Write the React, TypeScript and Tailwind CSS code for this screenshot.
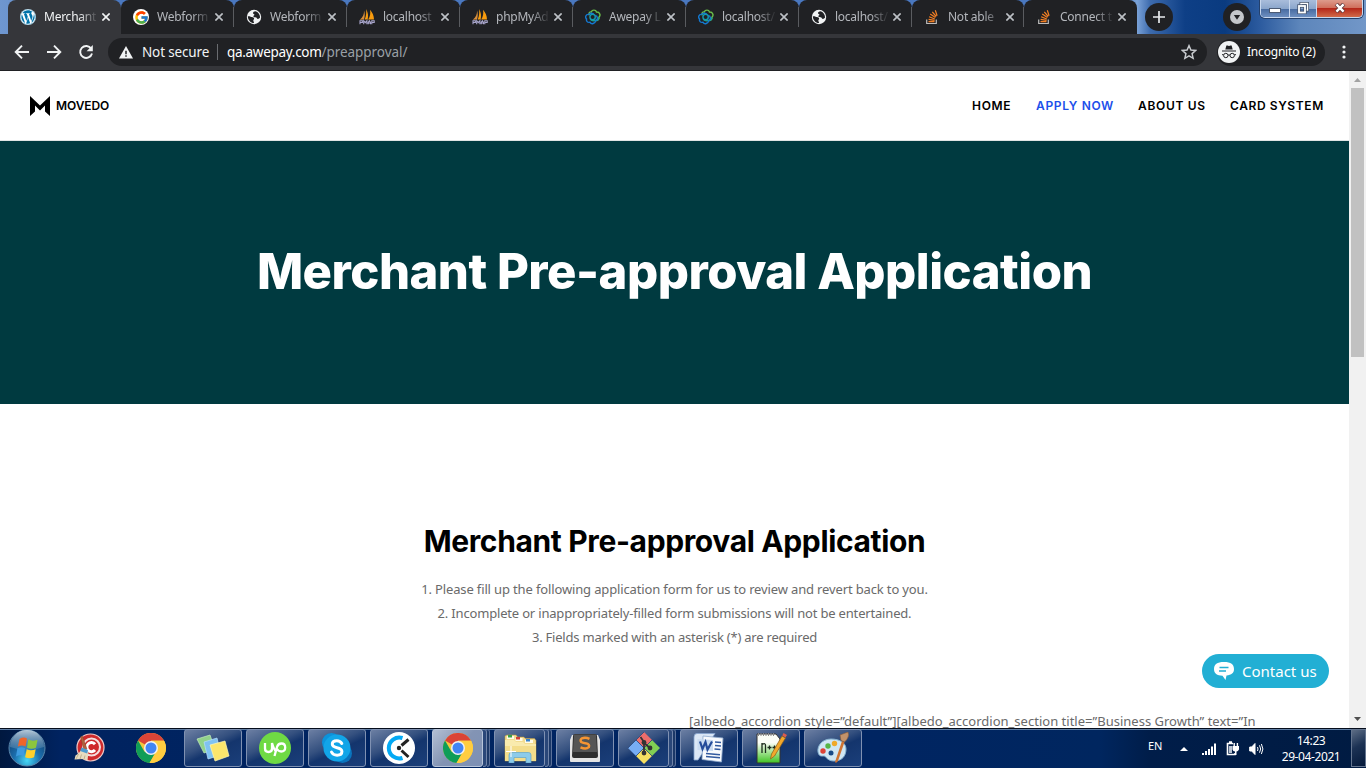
import React from 'react';
import { FaWordpress } from 'react-icons/fa';
import { FcGoogle } from 'react-icons/fc';

const WordpressIcon = () => (
  <span className="flex size-4 items-center justify-center rounded-full bg-white">
    <FaWordpress className="size-4 text-[#0073aa]" />
  </span>
);

const GoogleIcon = () => (
  <span className="flex size-4 items-center justify-center rounded-full bg-white">
    <FcGoogle className="size-[15px]" />
  </span>
);

const GlobeIcon = () => (
  <svg viewBox="0 0 16 16" className="size-4">
    <circle cx="8" cy="8" r="7.2" fill="#f1f3f4" />
    <path d="M1.800 7.200c1.700-.3 2.700.4 4 .9 1.500.5 2 .3 2.300 1.300.2.900-.8 1-.8 2s1 1.300.6 2.700c-3.300-.2-5.900-3-6.100-6.900z" fill="#202124" />
    <path d="M9.500 2.200C8 2.400 6.800 3.200 7 4.200c.2 1 1.500.7 1.400 1.600-.1.700-1.300.8-1 1.600.4 1 2 .5 2.900 1 .8.500.7 1.400 1.600 1.500.9 0 1.500-.9 2.200-1.500-.1-3-2-5.500-4.600-6.200z" fill="#202124" />
  </svg>
);

const PmaIcon = () => (
  <svg viewBox="0 0 16 16" className="size-4">
    <path d="M5 1.500C5.300 5 4 8 .8 10.800l4.200-.2C6 7 6 4 5 1.500z" fill="#d98f3c" />
    <path d="M7 0c2.200 3.600 2.400 7 1.600 10.600H5.700C7.200 7 7.600 3.500 7 0z" fill="#f89c0e" />
    <path d="M11 .8c2.600 3 3.900 6 4 9.700l-5.800.1C11.200 7.500 11.700 4 11 .8z" fill="#f89c0e" />
    <path d="M1 15.300v-3.600h2.400v1.800H1M4.700 15.300v-3.600l1.600 2 1.600-2v3.600M9.200 15.300v-1.800l1.200-1.800 1.100 1.800v1.800M9.200 14h2.300M12.800 15.300v-3.600h2.400v1.800h-2.400" fill="none" stroke="#a9a6cc" strokeWidth="1.100" />
  </svg>
);

const AwepayIcon = () => (
  <svg viewBox="0 0 16 16" className="size-4" fill="none" strokeWidth="1.400">
    <path d="M4.300 6.200C3.500 3.500 5 2.600 6.300 2.900 7.200.500 10.800.600 11.500 3c3.500-.1 4.500 3.500 2.300 5.200.6 2.300-1.300 3.600-3.300 3.200" stroke="#6cc04a" />
    <path d="M13.800 8.200c.6 2.300-1.300 3.600-3.300 3.200-2 .5-4.700.2-5.500-1.900" stroke="#1fa38a" />
    <path d="M10.200 6.500c2.800.5 3 4.300.5 5.200-.5 3-4.300 4-5.700 1.600-2.600.6-4-1.300-3.400-3.200C-.3 8.400.900 5.200 3.500 5.400c1-1.600 4.600-1.700 5.700.4" stroke="#1479d2" />
    <circle cx="7.600" cy="8.100" r="2.700" stroke="#149bb0" />
  </svg>
);

const StackIcon = () => (
  <svg viewBox="0 0 16 16" className="size-4" fill="none">
    <path d="M2.700 10.500v4h9.600v-4" stroke="#bcbbbb" strokeWidth="1.200" />
    <path d="M4.500 12.700h6M4.600 10.400l6 .9M5.100 7.800l5.700 2.200M6.200 5l5.200 3.400M8.300 2.800l3.900 4.700M11.300 1.200l1.800 5.500" stroke="#f48024" strokeWidth="1.200" />
  </svg>
);

const tabs = [
  { title: 'Merchant', icon: <WordpressIcon />, width: 'w-[113px]' },
  { title: 'Webform', icon: <GoogleIcon />, width: 'w-[113px]' },
  { title: 'Webform', icon: <GlobeIcon />, width: 'w-[113px]' },
  { title: 'localhost', icon: <PmaIcon />, width: 'w-[113px]' },
  { title: 'phpMyAd', icon: <PmaIcon />, width: 'w-[113px]' },
  { title: 'Awepay L', icon: <AwepayIcon />, width: 'w-[113px]' },
  { title: 'localhost/', icon: <AwepayIcon />, width: 'w-[113px]' },
  { title: 'localhost/', icon: <GlobeIcon />, width: 'w-[113px]' },
  { title: 'Not able', icon: <StackIcon />, width: 'w-[112px]' },
  { title: 'Connect t', icon: <StackIcon />, width: 'w-[113px]' },
];

function Tab({ title, icon, width, active, divider }: { title: string; icon: React.ReactNode; width: string; active: boolean; divider: boolean }) {
  const tone = active ? 'bg-[#35363a] text-[#f1f3f4]' : 'bg-[#202124] text-[#b4b7bc]';
  return (
    <div className={`flex h-[34px] shrink-0 items-center rounded-t-lg pl-3 ${width} ${tone}`}>
      <span className="shrink-0">{icon}</span>
      <span className="ml-2 w-[54px] whitespace-nowrap text-[12px] tracking-[-0.25px] [mask-image:linear-gradient(to_right,black_65%,rgba(0,0,0,0.15)_95%)]">{title}</span>
      <svg viewBox="0 0 8 8" className="ml-1 size-2 shrink-0" stroke={active ? '#f1f3f4' : '#bdc1c6'} strokeWidth="1.600">
        <path d="M.4.4l7.200 7.200M7.600.4L.4 7.600" />
      </svg>
      <span className={`ml-auto h-5 w-px ${divider ? 'bg-[#5a5c60]' : 'bg-transparent'}`} />
    </div>
  );
}

function TabStrip() {
  return (
    <div className="flex h-[34px] bg-[linear-gradient(90deg,#6f97cf_0,#4a78c0_110px,#4a78c0_1120px,#7aa2d8_1137px,#3e6cae_1150px,#0e3f86_1185px,#0a3b80_1225px,#2c5b9f_1260px,#5d86bb_1300px,#7297c8_1366px)]">
      <div className="w-2 shrink-0" />
      <div className="flex w-[1129px] shrink-0">
        {tabs.map((t, i) => (
          <Tab key={i} title={t.title} icon={t.icon} width={t.width} active={i === 0} divider={i > 0 && i < 9} />
        ))}
      </div>
      <div className="mt-[3px] ml-2 flex size-7 items-center justify-center rounded-full bg-[#202124]">
        <svg viewBox="0 0 12 12" className="size-3" stroke="#e8eaed" strokeWidth="1.700"><path d="M6 0v12M0 6h12" /></svg>
      </div>
      <div className="mt-[3px] ml-[50px] flex size-7 items-center justify-center rounded-full bg-[#202124]">
        <svg viewBox="0 0 14 14" className="size-[14px]"><circle cx="7" cy="7" r="7" fill="#c4c7cb" /><path d="M3.800 5h6.400L7 9.800z" fill="#202124" /></svg>
      </div>
      <div className="ml-[9px] flex h-[18px] w-[103px] overflow-hidden rounded-b-[5px] border border-t-0 border-[#c9d8ee] shadow-[0_0_0_1px_#23406c]">
        <div className="flex w-[29px] items-end justify-center border-r border-[#c9d8ee] bg-[linear-gradient(#a9bddb_0,#8ba6cc_50%,#46699f_51%,#6d8fc0)] pb-[4px]">
          <svg viewBox="0 0 12 5" className="h-[5px] w-3"><rect x=".5" y=".5" width="11" height="4" fill="#fff" stroke="#4b5a73" /></svg>
        </div>
        <div className="flex w-[27px] items-center justify-center border-r border-[#c9d8ee] bg-[linear-gradient(#a9bddb_0,#8ba6cc_50%,#46699f_51%,#6d8fc0)] pb-[1px]">
          <svg viewBox="0 0 12 12" className="size-3" fill="none"><path d="M4 3V1.500h6.500V8H9" stroke="#44536d" strokeWidth="3" /><path d="M4 3V1.500h6.500V8H9" stroke="#fff" strokeWidth="1.500" /><rect x="2" y="4" width="6" height="6.500" stroke="#44536d" strokeWidth="3.400" /><rect x="2" y="4" width="6" height="6.500" stroke="#fff" strokeWidth="1.800" /></svg>
        </div>
        <div className="flex flex-1 items-center justify-center bg-[linear-gradient(#dd9b8c_0,#d0705d_45%,#b5281a_50%,#d06a4a)] pb-[1px]">
          <svg viewBox="0 0 12 10" className="h-[10px] w-3"><path d="M2.200 1l7.600 8M9.800 1L2.200 9" stroke="#5b3438" strokeWidth="4" /><path d="M2.400 1.300l7.200 7.400M9.600 1.300L2.400 8.700" stroke="#fff" strokeWidth="2.400" /></svg>
        </div>
      </div>
    </div>
  );
}

const Incognito = () => (
  <svg viewBox="0 0 22 22" className="size-[22px]">
    <circle cx="11" cy="11" r="11" fill="#f1f3f4" />
    <path d="M7.300 8.600l1.100-4h1.100l1.500.5 1.500-.5h1.100l1.100 4zM4 9.400h14v1.100H4z" fill="#202124" />
    <g fill="none" stroke="#202124" strokeWidth="1"><circle cx="7.800" cy="14.500" r="2.200" /><circle cx="14.200" cy="14.500" r="2.200" /><path d="M10 14.200q1-.6 2 0M4 13.700h1.500M16.500 13.700H18" /></g>
  </svg>
);

function Toolbar() {
  return (
    <div className="flex h-[37px] items-center border-b border-[#202124] bg-[#35363a] text-[#e8eaed]">
      <svg viewBox="0 0 16 16" className="ml-[14px] size-4" fill="none" stroke="#f1f3f4" strokeWidth="1.900"><path d="M15 8H2M8 1.700L1.700 8 8 14.300" /></svg>
      <svg viewBox="0 0 16 16" className="ml-4 size-4" fill="none" stroke="#f1f3f4" strokeWidth="1.900"><path d="M1 8h13M8 1.700L14.300 8 8 14.300" /></svg>
      <svg viewBox="0 0 16 16" className="ml-4 size-4" fill="none"><path d="M13.200 4.600A6 6 0 1 0 14 9.500" stroke="#f1f3f4" strokeWidth="1.900" /><path d="M14.800 1v6.200H8.600z" fill="#f1f3f4" /></svg>
      <div className="ml-[14px] flex h-7 w-[1099px] items-center rounded-full bg-[#202124] text-[14px]">
        <svg viewBox="0 0 16 14" className="ml-[10px] h-[13px] w-[16px]"><path d="M8 0l7.600 13.500H.4z" fill="#f1f3f4" /><path d="M7.200 5h1.600v3.800H7.200zM7.200 10h1.600v1.700H7.200z" fill="#202124" /></svg>
        <span className="ml-2 w-[67px] whitespace-nowrap text-[13.500px] tracking-[-0.15px] text-[#f1f3f4]">Not secure</span>
        <span className="ml-2 h-4 w-px bg-[#6a6c70]" />
        <span className="ml-[9px] whitespace-nowrap text-[13.500px] tracking-[-0.3px] text-white">qa.awepay.com<span className="tracking-[-0.05px] text-[#9aa0a6]">/preapproval/</span></span>
        <svg viewBox="0 0 24 24" className="mr-[10px] ml-auto size-4" fill="none" stroke="#c8cbcf" strokeWidth="2.200"><path d="M12 2.500l2.900 6.600 7.100.6-5.400 4.700 1.600 7L12 17.700l-6.200 3.700 1.600-7L2 9.700l7.100-.6z" /></svg>
      </div>
      <div className="ml-[10px] flex h-[27px] w-[108px] items-center rounded-full bg-[#202124]">
        <span className="ml-[1px]"><Incognito /></span>
        <span className="ml-[7px] whitespace-nowrap text-[12px] tracking-[-0.2px] text-white">Incognito (2)</span>
      </div>
      <svg viewBox="0 0 4 14" className="ml-[17px] h-[14px] w-1" fill="#f1f3f4"><circle cx="2" cy="2" r="1.600" /><circle cx="2" cy="7" r="1.600" /><circle cx="2" cy="12" r="1.600" /></svg>
    </div>
  );
}

function Page() {
  return (
    <div className="flex w-[1349px] flex-col overflow-hidden bg-white">
      <header className="flex h-[70px] shrink-0 items-center border-b border-[#e0e4e4] pl-[30px] font-['Inter',sans-serif] text-[12px] font-semibold text-black">
        <svg viewBox="0 0 20 20" className="h-5 w-5"><path d="M0 0l10 9.500L20 0v20l-5-4.500V9.500l-5 5-5-5v6L0 20z" /></svg>
        <span className="ml-[6px] w-[54px] tracking-[-0.1px]">MOVEDO</span>
        <nav className="ml-[862px] flex whitespace-nowrap">
          <span className="w-16 tracking-[0.7px]">HOME</span>
          <span className="w-[102px] tracking-[0.650px] text-[#1c4fea]">APPLY NOW</span>
          <span className="w-[92px] tracking-[0.700px]">ABOUT US</span>
          <span className="tracking-[0.600px]">CARD SYSTEM</span>
        </nav>
      </header>
      <section className="flex h-[263px] shrink-0 items-center justify-center bg-[#003a40] pb-0.5">
        <h1 className="whitespace-nowrap font-['Inter',sans-serif] text-[49px] font-extrabold tracking-[-0.500px] text-white">Merchant Pre-approval Application</h1>
      </section>
      <section className="flex h-[324px] shrink-0 flex-col items-center overflow-hidden pt-[119px] text-[#6a6a6a]">
        <h2 className="h-9 whitespace-nowrap font-['Inter',sans-serif] text-[30px] leading-9 font-bold tracking-[-0.360px] text-black">Merchant Pre-approval Application</h2>
        <div className="mt-[18px] text-center text-[13px] leading-6 whitespace-nowrap">
          <p className="tracking-[-0.14px]">1. Please fill up the following application form for us to review and revert back to you.</p>
          <p className="tracking-[-0.18px]">2. Incomplete or inappropriately-filled form submissions will not be entertained.</p>
          <p className="tracking-[-0.220px]">3. Fields marked with an asterisk (*) are required</p>
        </div>
        <div className="mt-[60px] ml-[689px] self-start text-[13px] leading-6 tracking-[0.01px] whitespace-nowrap">[albedo_accordion style=”default”][albedo_accordion_section title=”Business Growth” text=”In</div>
      </section>
    </div>
  );
}

function Scrollbar() {
  return (
    <div className="flex w-[17px] flex-col items-center bg-[#f1f1f1]">
      <svg viewBox="0 0 17 17" className="size-[17px]"><path d="M5 11l3.500-4 3.500 4z" fill="#a3a3a3" /></svg>
      <div className="h-[269px] w-[13px] bg-[#c1c1c1]" />
      <svg viewBox="0 0 17 17" className="mt-auto size-[17px]"><path d="M5 6l3.500 4L12 6z" fill="#505050" /></svg>
    </div>
  );
}

const Chrome = () => (
  <svg viewBox="0 0 30 30" className="size-[30px]">
    <circle cx="15" cy="15" r="15" fill="#f4c63d" />
    <path d="M15 15L2 7.500A15 15 0 0 1 28 7.500H15z" fill="#db4437" />
    <path d="M2 7.500A15 15 0 0 0 13.500 30l6.500-11.500L15 15 8.500 18.700z" fill="#0f9d58" />
    <path d="M15 8h13.300q1.700 3.500 1.700 7a15 15 0 0 1-16.500 15L21 17.500z" fill="#ffcd40" />
    <circle cx="15" cy="15" r="7" fill="#f1f1f1" />
    <circle cx="15" cy="15" r="5.500" fill="#4285f4" />
  </svg>
);

const StartOrb = () => (
  <svg viewBox="0 0 38 38" className="size-[38px]">
    <defs>
      <radialGradient id="orb" cx=".5" cy=".85" r=".8"><stop offset="0" stopColor="#46d7f5" /><stop offset=".45" stopColor="#1b6fae" /><stop offset="1" stopColor="#123a68" /></radialGradient>
      <linearGradient id="shine" x2="0" y2="1"><stop offset="0" stopColor="#d2e2ee" stopOpacity=".85" /><stop offset="1" stopColor="#7fa6c4" stopOpacity=".25" /></linearGradient>
    </defs>
    <circle cx="19" cy="19" r="18" fill="url(#orb)" stroke="#5b87ab" />
    <path d="M2 18a17 17 0 0 1 34 0Q19 24 2 18z" fill="url(#shine)" />
    <path d="M11.500 10q4-2.500 7.500-.5l-1.500 8q-3.500-2-7.600 0z" fill="#f0652a" />
    <path d="M20.300 10.300q4 2.500 9.200.4L28 18.700q-4.500 2-9 0z" fill="#8cc63e" />
    <path d="M9.400 19.300q4-2 7.700 0l-1.500 8q-3.600-2-7.600.3z" fill="#3d9be0" />
    <path d="M18.700 20.200q4 2 9 0l-1.600 8q-4.500 2-9 0z" fill="#fdd02c" />
  </svg>
);

const CCleaner = () => (
  <svg viewBox="0 0 32 32" className="size-8">
    <circle cx="17.500" cy="15.500" r="13.500" fill="#cf2a2c" stroke="#efc9c6" strokeWidth="1.200" />
    <circle cx="18.500" cy="15" r="8.500" fill="none" stroke="#f5dedd" strokeWidth="2" />
    <path d="M22 12.200a4.600 4.600 0 1 0 0 5.800" fill="none" stroke="#fff" strokeWidth="3" />
    <path d="M7.500 5l2-1 4.500 13-3 1.500z" fill="#b0623c" stroke="#7d3d22" strokeWidth=".4" />
    <path d="M8.500 17.500l7 2-1 9-4-1.500-9 .5 1-4 3-2z" fill="#e7dcc0" />
    <path d="M8.500 15.500l6.500 2.500-.8 3.500-7-2.500z" fill="#4d9bd0" />
    <path d="M5.500 22l-2.500 5M8.500 22.500L7 27M12 23.500l-1 4" stroke="#b8a67e" strokeWidth=".8" />
  </svg>
);

const Notes = () => (
  <svg viewBox="0 0 34 28" className="h-7 w-[34px]">
    <path d="M1 5l13-4 5 14-11 4z" fill="#91d38a" stroke="#c5ecbd" strokeWidth=".7" />
    <path d="M8 8l13-4 4 17-13 4z" fill="#7fc2f2" stroke="#b9e0fa" strokeWidth=".7" />
    <path d="M14 11l15-4 4 15-14 5z" fill="#fbe56c" stroke="#fff6b4" strokeWidth=".7" />
  </svg>
);

const Upwork = () => (
  <svg viewBox="0 0 32 32" className="size-8">
    <circle cx="16" cy="16" r="16" fill="#6fda44" />
    <path d="M6 11v5.500q0 3.500 3.500 3.500t3.500-3.500V11q2 7 4.500 9M15.500 24l2.500-9q1-3.500 4.500-3.500 3.700 0 3.700 4 0 4-4 4-3 0-5-3.500" fill="none" stroke="#fff" strokeWidth="2.300" />
  </svg>
);

const Skype = () => (
  <svg viewBox="0 0 32 32" className="size-8">
    <circle cx="10.500" cy="10.500" r="9.500" fill="#0b93dc" /><circle cx="21.500" cy="21.500" r="9.500" fill="#0a74bd" />
    <circle cx="16" cy="16" r="13.500" fill="#12a5e8" />
    <path d="M20.800 11.500q-1.500-2.800-5-2.800-4.500 0-4.500 3.400 0 2.700 4.700 3.600 4.900.9 4.900 3.800 0 3.700-4.800 3.700-4.200 0-5.600-3.200" fill="none" stroke="#fff" strokeWidth="3" strokeLinecap="round" />
  </svg>
);

const Clockify = () => (
  <svg viewBox="0 0 32 32" className="size-8">
    <circle cx="16" cy="16" r="16" fill="#fff" />
    <path d="M19.500 6A10.500 10.500 0 1 0 19.500 26" fill="none" stroke="#03a9f4" strokeWidth="4" />
    <circle cx="16" cy="16" r="2.200" fill="#222" />
    <path d="M18.500 13.500l7-6M18.500 18.500l7 6.500" stroke="#222" strokeWidth="3" />
  </svg>
);

const Explorer = () => (
  <svg viewBox="0 0 34 30" className="h-[30px] w-[34px]">
    <path d="M2 3l2-1h9l1.500 2h6l2 1.500h9l1.500 2V28H2z" fill="#f2dc90" stroke="#c39b3a" strokeWidth=".5" />
    <path d="M4 3h7v3H4zM12.500 5h7v3h-7zM22 7h8v3h-8z" fill="#fffbe8" />
    <path d="M5 2h4v2.500H5z" fill="#37a048" /><path d="M13 4h4v2.500h-4z" fill="#d23f35" /><path d="M23 6h4v2.500h-4z" fill="#3983cc" />
    <path d="M2 7h9l2 2h7l2 2h11v17H2z" fill="#f9ebae" />
    <path d="M2 13h31v15H2z" fill="#f3dd8b" />
    <path d="M6 30v-8q0-2.500 2.500-2.500h17q2.500 0 2.500 2.500v8h-5v-5.500H11V30z" fill="#8ccbea" stroke="#5fa5cb" strokeWidth=".7" />
    <path d="M8 13v11M3 18.500h10" stroke="#fff" strokeWidth="1" />
  </svg>
);

const Sublime = () => (
  <svg viewBox="0 0 32 30" className="h-[30px] w-8">
    <path d="M1 7l2-5h26l2 5v21q0 1-1 1H2q-1 0-1-1z" fill="#e4e4e4" />
    <path d="M3 23L4 3q0-2 2-2h20q2 0 2 2l1 20q0 2-2 2H5q-2 0-2-2z" fill="#2d2d2d" />
    <path d="M5 1.500h22l1 17.500H4z" fill="#555" />
    <path d="M20.500 5.800q-4-1.800-7.500-.5-2.300 1.700-.8 3.700 1.800 1.200 5.300 1.400 3.500 1 2.300 3.800-2.800 2.600-8.300.2" fill="none" stroke="#f79533" strokeWidth="2.500" />
  </svg>
);

const Git = () => (
  <svg viewBox="0 0 32 32" className="size-8">
    <path d="M16 0l8 8-8 8-8-8z" fill="#ed6d6b" /><path d="M24 8l8 8-8 8-8-8z" fill="#80ce54" /><path d="M8 8l8 8-8 8-8-8z" fill="#77adf5" /><path d="M16 16l8 8-8 8-8-8z" fill="#f5df62" />
    <path d="M0 16L16 0M8 8l16 16M8 24L24 8" stroke="#27477b" strokeWidth=".8" />
    <path d="M12.500 5l3.500 5v11M16 11l6 5" fill="none" stroke="#333" strokeWidth="1.800" />
    <circle cx="16" cy="10.500" r="2.400" fill="#333" /><circle cx="16" cy="21" r="2.400" fill="#333" /><circle cx="22" cy="16" r="2.400" fill="#333" />
  </svg>
);

const Word = () => (
  <svg viewBox="0 0 32 30" className="h-[30px] w-8">
    <path d="M4 .5h18L5 27H1V4Q1 .5 4 .5z" fill="#dbe7f6" stroke="#86a4cf" strokeWidth=".8" />
    <path d="M10 3l20 2-1.500 24L9 26.500z" fill="#f8fafd" stroke="#8fa9cd" strokeWidth=".8" />
    <path d="M22 9l6 .5M22 12.500l6 .5M21.500 16l6 .5M13 20.500l14 1.300M13 23.500l14 1.300" stroke="#31599f" strokeWidth="1.600" />
    <path d="M4.500 6L20 7v11L4.500 17z" fill="#c9dbf1" />
    <path d="M7 8.500l2.500 7.500L12.500 9l2 7.500L19 8.500" fill="none" stroke="#244c9b" strokeWidth="2.200" />
  </svg>
);

const Npp = () => (
  <svg viewBox="0 0 32 32" className="size-8">
    <defs><linearGradient id="npp" x2="0" y2="1"><stop offset=".3" stopColor="#fbfdf6" /><stop offset="1" stopColor="#3fc322" /></linearGradient></defs>
    <path d="M2 2h19l4 5v24H2z" fill="url(#npp)" stroke="#333" />
    <path d="M3 2.500h17" stroke="#888" strokeWidth="3" strokeDasharray="1 1.500" />
    <path d="M7 21V11M7 12.500q3.500-2 3.500 1V21M12.500 15.500h4M14.500 13.500v4M17.500 15.500h4M19.500 13.500v4" fill="none" stroke="#1c2a1c" strokeWidth="1.300" />
    <path d="M27 4l3.500 2-11 18-4 3 1-5z" fill="#f2a82c" stroke="#8b5b19" strokeWidth=".7" /><path d="M27.300 3.500L28.500 1l3.500 2-1.500 2.500z" fill="#dd5c4d" />
  </svg>
);

const Paint = () => (
  <svg viewBox="0 0 34 32" className="h-8 w-[34px]">
    <path d="M15 7C6 7 1 14 2 20c1 5 4 4 6 4s3 5 10 5c9 0 12-6 12-12S24 7 15 7z" fill="#cfe6f4" stroke="#86b3d1" />
    <circle cx="7" cy="19" r="2.700" fill="#dd4337" /><circle cx="12" cy="14" r="2.700" fill="#55b546" /><circle cx="18.500" cy="11.500" r="2.700" fill="#efa92a" /><circle cx="15" cy="21" r="2.500" fill="#174a88" />
    <path d="M26 9l2.500 1L22 29q-2 3-3 1z" fill="#cf7433" /><path d="M24 3l8-3q2 5-3.500 10L25 8.500z" fill="#c2926a" stroke="#8c5c3b" strokeWidth=".6" />
  </svg>
);

const apps = [
  { icon: <Notes />, stacked: false, lit: false },
  { icon: <Upwork />, stacked: false, lit: false },
  { icon: <Skype />, stacked: false, lit: false },
  { icon: <Clockify />, stacked: false, lit: false },
  { icon: <Chrome />, stacked: true, lit: true },
  { icon: <Explorer />, stacked: true, lit: false },
  { icon: <Sublime />, stacked: false, lit: false },
  { icon: <Git />, stacked: true, lit: false },
  { icon: <Word />, stacked: false, lit: false },
  { icon: <Npp />, stacked: false, lit: false },
  { icon: <Paint />, stacked: false, lit: false },
];

function AppButton({ icon, stacked, lit }: { icon: React.ReactNode; stacked: boolean; lit: boolean }) {
  const face = lit
    ? 'border-[#b8c5da] bg-[linear-gradient(135deg,#b3bfd3,#8394b4_50%,#7d90b4)]'
    : 'border-[#7f91b2] bg-[linear-gradient(155deg,#6c7fa3_0,#34507f_40%,#14356d_55%,#1b3f7a)]';
  return (
    <div className="flex h-[38px] w-[58px]">
      <div className={`flex flex-1 items-center justify-center rounded-[3px] border ${face}`}>{icon}</div>
      {stacked && <div className="w-1 rounded-r-[3px] border border-l-0 border-[#6f83a8] bg-[#2a4779]" />}
      {stacked && <div className="w-[3px] rounded-r-[3px] border border-l-0 border-[#5a7099] bg-[#1b3868]" />}
    </div>
  );
}

function Taskbar() {
  return (
    <div className="flex h-10 items-start border-t border-[#050d1c] bg-[linear-gradient(90deg,#00183f_0,#002360_60px,#002562_870px,#00265f_1100px,#001d49_1150px,#001b42)] text-white shadow-[inset_0_1px_0_#5f7ea4]">
      <div className="flex h-[38px] w-[58px] items-center justify-center pr-1"><StartOrb /></div>
      <div className="flex h-[38px] w-[62px] items-center justify-center"><CCleaner /></div>
      <div className="flex h-[38px] w-[62px] items-center justify-center"><Chrome /></div>
      <div className="ml-0.5 flex gap-1">
        {apps.map((a, i) => <AppButton key={i} {...a} />)}
      </div>
      <div className="ml-auto flex h-full items-center text-[12px]">
        <span className="w-4 pb-[5px] text-[11px] tracking-[-0.1px]">EN</span>
        <svg viewBox="0 0 8 4" className="ml-[16px] h-1 w-2"><path d="M0 4l4-4 4 4z" fill="#fff" /></svg>
        <svg viewBox="0 0 15 12" className="ml-[14px] h-3 w-[15px]" fill="#fff"><path d="M0 10h2v2H0zM3 8h2v4H3zM6 6h2v6H6zM9 3.500h2V12H9zM12 .5h2V12h-2z" /></svg>
        <svg viewBox="0 0 14 15" className="ml-[9px] h-[15px] w-[14px]" fill="none"><path d="M7 2.500H1.500v11H9V12M3 1h3" stroke="#fff" strokeWidth="1.600" /><path d="M3 5h3v7H3z" fill="#b9c3d2" /><path d="M6.500 5H13v3.500q-1 2-2.500 2H9q-2 0-2.500-2zM7.500 2v3h1.400V2zM10.700 2v3h1.400V2zM9 10h1.500v4H9z" fill="#fff" /></svg>
        <svg viewBox="0 0 15 14" className="ml-[9px] h-[14px] w-[15px]" fill="none" stroke="#fff"><path d="M.7 5h2L6 1.500v11L2.700 9h-2z" fill="#fff" /><path d="M8.500 5q1 2 0 4M10.500 3.300q2.300 3.700 0 7.400M12.400 2q3 5 0 10" /></svg>
        <div className="ml-[17px] w-[60px] text-center text-[12px] leading-4 tracking-[-0.400px] whitespace-nowrap"><div>14:23</div><div>29-04-2021</div></div>
        <div className="ml-[10px] h-[38px] w-[15px] self-start border border-[#64758f] bg-[linear-gradient(150deg,#5d6d85,#1c3254_45%,#04193a)]" />
      </div>
    </div>
  );
}

export default function App() {
  return (
    <div className="relative flex h-[768px] w-[1366px] flex-col overflow-hidden font-['Noto_Sans',sans-serif]">
      <TabStrip />
      <Toolbar />
      <div className="flex h-[657px]">
        <Page />
        <Scrollbar />
      </div>
      <Taskbar />
      <button className="absolute top-[654px] left-[1202px] flex h-[34px] w-[127px] items-center rounded-full bg-[#22afd4] pl-3 text-white">
        <svg viewBox="0 0 20 18" className="h-[18px] w-5"><path d="M10 0C3 0 0 2.500 0 7s3 6.500 8.500 6.700L11.500 18l1-4.500C17.500 13 20 11 20 7c0-4.500-3-7-10-7z" fill="#fff" /><path d="M5.500 5.500h9M5 9h7" stroke="#22afd4" strokeWidth="1.300" /></svg>
        <span className="ml-2 text-[15px] whitespace-nowrap">Contact us</span>
      </button>
    </div>
  );
}
